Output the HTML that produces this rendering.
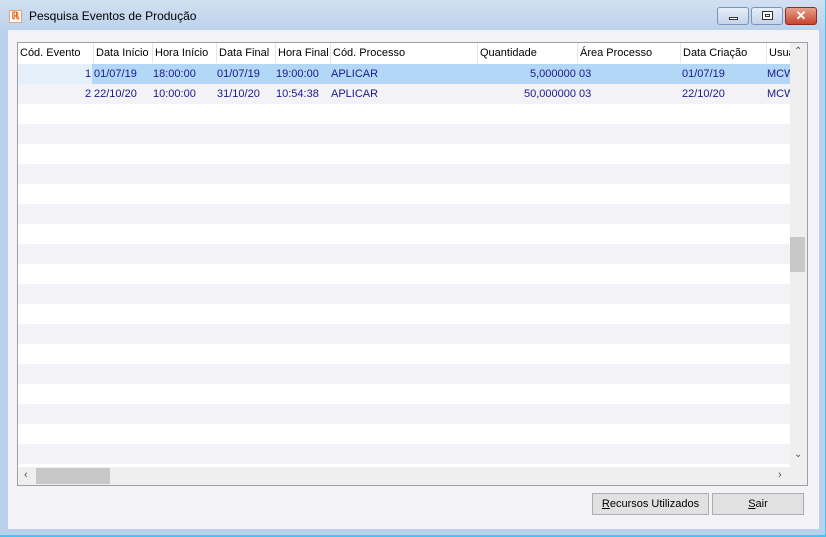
<!DOCTYPE html><html><head><style>
*{margin:0;padding:0;box-sizing:border-box}
body{width:826px;height:537px;overflow:hidden;background:#b9d1ea;font-family:"Liberation Sans",sans-serif;font-size:11px;position:relative}
.abs{position:absolute}
#title{left:0;top:0;width:826px;height:30px;background:linear-gradient(#d2e0f1,#bcd2ec)}
#client{left:8px;top:30px;width:811px;height:499px;background:#f2f2f7}
#grid{left:17px;top:42px;width:791px;height:444px;border:1px solid #a0a0a0;background:#fff;overflow:hidden}
.row{position:absolute;left:0;width:772px;height:20px;white-space:nowrap}
.c{position:absolute;top:0;line-height:20px;color:#1a1a8c}
.h .c{color:#000;border-left:1px solid #e6e6e6;padding-left:2px}
.btn{position:absolute;border:1px solid #adadad;background:#e1e1e1;text-align:center;line-height:20px;font-size:11px;color:#000}
.wb{position:absolute;top:7px;height:18px;border:1px solid #7f94b4;border-radius:3px;background:linear-gradient(#e6eef8,#c4d4ea)}
</style></head><body>
<div class="abs" id="title"></div>
<div class="abs" style="left:9px;top:10px;width:13px;height:13px;background:#fff;border:1px solid #f0a070;color:#e85b10;font-size:10px;line-height:11px;text-align:center;font-weight:bold">ℝ</div>
<div class="abs" style="left:29px;top:9px;font-size:12px;color:#000">Pesquisa Eventos de Produção</div>
<div class="wb" style="left:717px;width:32px"><div class="abs" style="left:11px;top:9px;width:9px;height:3px;border:1px solid #333;background:#fff"></div></div>
<div class="wb" style="left:751px;width:32px"><div class="abs" style="left:10px;top:3px;width:11px;height:9px;border:1px solid #333;background:#fff"><div style="margin:2px;height:3px;border:1px solid #333"></div></div></div>
<div class="wb" style="left:785px;width:32px;background:linear-gradient(#e8a08e,#c8442a);border-color:#8a3020;color:#fff;font-weight:bold;font-size:13px;text-align:center;line-height:16px">✕</div>
<div class="abs" id="client"></div>
<div class="abs" style="left:825px;top:0;width:1px;height:537px;background:#3cc8f0"></div>
<div class="abs" style="left:0;top:535px;width:826px;height:2px;background:#3cc8f0"></div>
<div class="abs" id="grid">
<div class="row h" style="top:0;height:21px;background:#fff">
<div class="c" style="left:0;border:0">Cód. Evento</div>
<div class="c" style="left:75px">Data Início</div>
<div class="c" style="left:134px">Hora Início</div>
<div class="c" style="left:198px">Data Final</div>
<div class="c" style="left:257px">Hora Final</div>
<div class="c" style="left:312px">Cód. Processo</div>
<div class="c" style="left:459px">Quantidade</div>
<div class="c" style="left:559px">Área Processo</div>
<div class="c" style="left:662px">Data Criação</div>
<div class="c" style="left:748px">Usuá</div>
</div>
<div id="rows"></div>
<div class="row" style="top:21px;background:#b3d7f7">
<div class="abs" style="left:0;top:0;width:74px;height:20px;background:#e5f0fb"></div>
<div class="c" style="left:67px">1</div>
<div class="c" style="left:76px">01/07/19</div><div class="c" style="left:135px">18:00:00</div>
<div class="c" style="left:199px">01/07/19</div><div class="c" style="left:258px">19:00:00</div>
<div class="c" style="left:313px">APLICAR</div><div class="c" style="left:512px">5,000000</div>
<div class="c" style="left:561px">03</div><div class="c" style="left:664px">01/07/19</div><div class="c" style="left:749px">MCW</div>
</div>
<div class="row" style="top:41px;background:#f2f2f7">
<div class="c" style="left:67px">2</div>
<div class="c" style="left:76px">22/10/20</div><div class="c" style="left:135px">10:00:00</div>
<div class="c" style="left:199px">31/10/20</div><div class="c" style="left:258px">10:54:38</div>
<div class="c" style="left:313px">APLICAR</div><div class="c" style="left:506px">50,000000</div>
<div class="c" style="left:561px">03</div><div class="c" style="left:664px">22/10/20</div><div class="c" style="left:749px">MCW</div>
</div>
<div class="row" style="top:81px;background:#f2f2f7"></div>
<div class="row" style="top:121px;background:#f2f2f7"></div>
<div class="row" style="top:161px;background:#f2f2f7"></div>
<div class="row" style="top:201px;background:#f2f2f7"></div>
<div class="row" style="top:241px;background:#f2f2f7"></div>
<div class="row" style="top:281px;background:#f2f2f7"></div>
<div class="row" style="top:321px;background:#f2f2f7"></div>
<div class="row" style="top:361px;background:#f2f2f7"></div>
<div class="row" style="top:401px;background:#f2f2f7"></div>
<div class="abs" style="left:772px;top:0;width:17px;height:424px;background:#efefef"></div>
<div class="abs" style="left:772px;top:194px;width:15px;height:35px;background:#c8c8c8"></div>
<div class="abs" style="left:776px;top:3px;color:#555;font-size:10px">⌃</div>
<div class="abs" style="left:776px;top:406px;color:#555;font-size:10px">⌄</div>
<div class="abs" style="left:0;top:424px;width:789px;height:18px;background:#efefef"></div>
<div class="abs" style="left:18px;top:425px;width:74px;height:16px;background:#c8c8c8"></div>
<div class="abs" style="left:6px;top:426px;color:#555;font-size:11px">‹</div>
<div class="abs" style="left:760px;top:426px;color:#555;font-size:11px">›</div>
</div>
<div class="btn" style="left:592px;top:493px;width:117px;height:22px"><u>R</u>ecursos Utilizados</div>
<div class="btn" style="left:712px;top:493px;width:92px;height:22px"><u>S</u>air</div>
</body></html>
